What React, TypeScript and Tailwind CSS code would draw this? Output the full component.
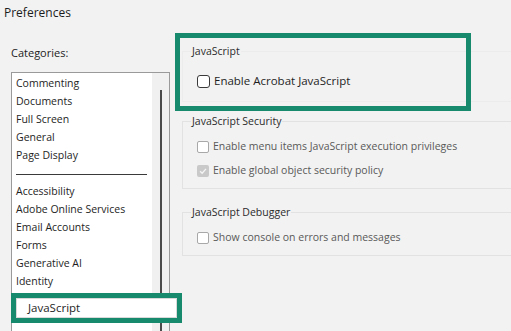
import React from "react";

const font = { fontFamily: '"Open Sans", "Noto Sans", sans-serif' };

const categoriesTop = ["Commenting", "Documents", "Full Screen", "General", "Page Display"];
const categoriesBottom = [
  "Accessibility",
  "Adobe Online Services",
  "Email Accounts",
  "Forms",
  "Generative AI",
  "Identity",
];

function Box({ checked, strong }: { checked?: boolean; strong?: boolean }) {
  if (checked) {
    return (
      <span className="flex h-[12px] w-[12px] items-center justify-center rounded-[2px] bg-[#c9c9c9]">
        <svg viewBox="0 0 12 12" className="h-[10px] w-[10px]">
          <path d="M2.5 6.2 L5 8.6 L9.6 3.4" fill="none" stroke="#f4f4f4" strokeWidth="1.6" />
        </svg>
      </span>
    );
  }
  return (
    <span
      className={
        strong
          ? "h-[13px] w-[13px] rounded-[3px] border border-[#3a3a3a] bg-white"
          : "h-[12px] w-[12px] rounded-[2px] border border-[#a8a8a8] bg-white"
      }
    />
  );
}

function Row({ label, checked, strong }: { label: string; checked?: boolean; strong?: boolean }) {
  return (
    <div className="flex h-[24px] items-center gap-[4px]">
      <Box checked={checked} strong={strong} />
      <span className={strong ? "text-[11.5px] text-[#1f1f1f]" : "text-[10.5px] text-[#595959]"}>{label}</span>
    </div>
  );
}

function Group({
  title,
  className,
  children,
}: {
  title: string;
  className?: string;
  children: React.ReactNode;
}) {
  return (
    <fieldset className={"-mr-[12px] border border-[#e2e2e2] " + (className ?? "")}>
      <legend className="ml-[8px] px-[1px] text-[10.5px] leading-[16px] text-[#2b2b2b]">{title}</legend>
      <div className="pl-[14px]">{children}</div>
    </fieldset>
  );
}

export default function App() {
  return (
    <div className="flex h-[331px] w-[511px] flex-col overflow-hidden bg-[#f2f2f2]" style={font}>
      <div className="h-[28px] pl-[4px] pt-[4px] text-[12px] leading-[18px] text-[#1c1c1c]">Preferences</div>
      <div className="flex flex-1">
        <div className="flex w-[170px] flex-col pl-[11px]">
          <div className="mt-[17px] text-[11px] leading-[16px] text-[#222]">Categories:</div>
          <div className="relative mt-[11px] flex w-[159px] flex-1 border border-b-0 border-[#9a9a9a] bg-white">
            <div className="flex flex-1 flex-col pl-[4px] pt-[2px] text-[10.5px] text-[#1e1e1e]">
              {categoriesTop.map((c) => (
                <div key={c} className="flex h-[18px] items-center">
                  {c}
                </div>
              ))}
              <div className="mb-[8px] mt-[9px] h-px w-[131px] bg-[#3a3a3a]" />
              {categoriesBottom.map((c) => (
                <div key={c} className="flex h-[18px] items-center">
                  {c}
                </div>
              ))}
            </div>
            <div className="flex w-[17px] justify-center bg-[#f0f0f0] pt-[17px]">
              <div className="w-[2px] bg-[#4a4a4a]" />
            </div>
            <div className="absolute left-[-1px] top-[220px] h-[30px] w-[171px] border-[5px] border-[#178a6d] bg-white">
              <div className="h-full w-full border border-[#d9d9d9] pl-[11px] text-[11.5px] leading-[18px] text-[#1e1e1e]">
                JavaScript
              </div>
            </div>
          </div>
        </div>
        <div className="relative flex flex-1 flex-col pl-[12px]">
          <Group title="JavaScript" className="mt-[15px] border-[#ececec] pb-[8px] pt-[10px]">
            <Row label="Enable Acrobat JavaScript" strong />
          </Group>
          <Group title="JavaScript Security" className="mt-[11px] pb-[5px] pt-[6px]">
            <Row label="Enable menu items JavaScript execution privileges" />
            <Row label="Enable global object security policy" checked />
          </Group>
          <Group title="JavaScript Debugger" className="mt-[15px] pb-[5px] pt-[6px]">
            <Row label="Show console on errors and messages" />
          </Group>
          <div className="absolute left-[5px] top-[5px] h-[78px] w-[296px] border-[5px] border-[#178a6d]" />
        </div>
      </div>
    </div>
  );
}
